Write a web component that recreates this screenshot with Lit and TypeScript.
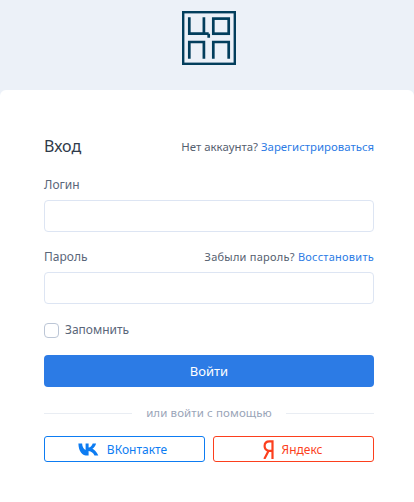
import { css, html, LitElement, svg } from 'lit';
import { customElement } from 'lit/decorators.js';

const logo = svg`
  <svg class="logo" width="54" height="54" viewBox="0 0 54 54" fill="none" stroke="#033e5c" stroke-width="2.7">
    <rect x="1.200" y="1.200" width="51.600" height="51.600" stroke-width="2.400" />
    <path d="M7.300 6.300V22.700H26.700M21.900 6.300V22.700M26.700 22.700V26.700" />
    <rect x="31.300" y="7.600" width="15.400" height="15.100" />
    <path d="M7.300 47.700V31H21.900V47.700" />
    <path d="M31.300 47.700V31H46.700V47.700" />
  </svg>
`;

const vkIcon = svg`
  <svg width="21" height="13" viewBox="0 0 21 13">
    <path
      fill="#0d7cf2"
      d="M0.400 0.400H4.100C4.300 3.400 5.500 6 7.600 7V0.400H10.600V4.600C12.500 4.400 14 2.500 14.700 0.400H18.100C17.500 2.900 15.800 4.800 14.400 5.700C16 6.500 18.800 8.500 20.300 12.600H16.500C15.500 10.300 13.300 8.300 10.600 8.100V12.600H9.800C4 12.600 0.600 8.200 0.400 0.400Z"
    />
  </svg>
`;

const yandexIcon = svg`
  <svg width="11" height="19" viewBox="0 0 11 19" fill="none" stroke="#fc3f1d">
    <path stroke-width="2.200" d="M9.500 19V1.300H6.500C3.500 1.300 1.600 3 1.600 5.900C1.600 8.500 3 10 5.500 10.900H9.500M5.500 10.900L1.300 19" />
  </svg>
`;

@customElement('app-root')
export class AppRoot extends LitElement {
  static override styles = css`
    :host {
      display: block;
      height: 502px;
      background: #ecf1f8;
      font-family: 'Noto Sans', 'Open Sans', sans-serif;
      font-size: 12px;
      color: #5a6679;
      overflow: hidden;
    }
    .top {
      height: 90px;
      padding: 11px 0 0 4px;
      box-sizing: border-box;
      display: flex;
      justify-content: center;
    }
    .logo {
      display: block;
    }
    .card {
      height: 412px;
      box-sizing: border-box;
      background: #fff;
      border-radius: 6px 6px 0 0;
      padding: 44px 40px 0 44px;
    }
    .row {
      display: flex;
      justify-content: space-between;
      align-items: center;
    }
    .title {
      font-size: 16px;
      line-height: 24px;
      color: #2f3a4a;
    }
    a {
      color: #2c7be5;
      text-decoration: none;
    }
    .hint {
      color: #55606f;
      font-size: 11.400px;
    }
    .hint.small {
      font-size: 11px;
      letter-spacing: 0.250px;
    }
    .label {
      line-height: 18px;
    }
    .login-row {
      margin-top: 18px;
    }
    .pass-row {
      margin-top: 16px;
    }
    .field {
      height: 32px;
      box-sizing: border-box;
      margin-top: 6px;
      border: 1px solid #dde5f3;
      border-radius: 4px;
      background: #fff;
    }
    .remember {
      display: flex;
      align-items: center;
      gap: 6px;
      margin-top: 18px;
      line-height: 16px;
    }
    .check {
      width: 15px;
      height: 15px;
      box-sizing: border-box;
      border: 1px solid #bcc6d6;
      border-radius: 4px;
    }
    .submit {
      height: 32px;
      margin-top: 17px;
      border-radius: 4px;
      background: #2c7be5;
      color: #fff;
      font-size: 13px;
      display: flex;
      align-items: center;
      justify-content: center;
    }
    .divider {
      display: flex;
      align-items: center;
      gap: 14px;
      margin-top: 18px;
      color: #9aa5b8;
      font-size: 11.500px;
      line-height: 16px;
      letter-spacing: 0.100px;
    }
    .divider::before,
    .divider::after {
      content: '';
      flex: 1;
      height: 1px;
      background: #e9edf3;
    }
    .social {
      display: grid;
      grid-template-columns: 1fr 1fr;
      gap: 8px;
      margin-top: 15px;
    }
    .btn {
      height: 26px;
      box-sizing: border-box;
      border: 1px solid;
      border-radius: 3px;
      display: flex;
      align-items: center;
      justify-content: center;
      gap: 8px;
      font-size: 12px;
    }
    .vk {
      color: #0d7cf2;
      border-color: #0d7cf2;
      padding-right: 4px;
    }
    .ya {
      color: #fc3f1d;
      border-color: #fc3f1d;
      padding-right: 2px;
    }
  `;

  override render() {
    return html`
      <div class="top">${logo}</div>
      <div class="card">
        <div class="row">
          <span class="title">Вход</span>
          <span class="hint">Нет аккаунта? <a href="#">Зарегистрироваться</a></span>
        </div>
        <div class="row label login-row"><span>Логин</span></div>
        <div class="field"></div>
        <div class="row label pass-row">
          <span>Пароль</span>
          <span class="hint small">Забыли пароль? <a href="#">Восстановить</a></span>
        </div>
        <div class="field"></div>
        <div class="remember"><span class="check"></span>Запомнить</div>
        <div class="submit">Войти</div>
        <div class="divider">или войти с помощью</div>
        <div class="social">
          <div class="btn vk">${vkIcon}ВКонтакте</div>
          <div class="btn ya">${yandexIcon}Яндекс</div>
        </div>
      </div>
    `;
  }
}
